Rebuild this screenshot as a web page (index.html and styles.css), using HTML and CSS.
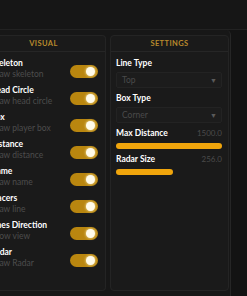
FILE: index.html
```html
<!DOCTYPE html>
<html lang="en">
<head>
	<meta charset="UTF-8">
	<title>Menu</title>
	<link rel="stylesheet" href="styles.css">
</head>
<body>
	<div class="topbar"></div>
	<div class="frame">
		<div class="card visual">
			<div class="card-head">VISUAL</div>
			<div class="rows">
				<div class="row"><div class="txt"><div class="t">Skeleton</div><div class="s">Draw skeleton</div></div><span class="tog"></span></div>
				<div class="row"><div class="txt"><div class="t">Head Circle</div><div class="s">Draw head circle</div></div><span class="tog"></span></div>
				<div class="row"><div class="txt"><div class="t">Box</div><div class="s">Draw player box</div></div><span class="tog"></span></div>
				<div class="row"><div class="txt"><div class="t">Distance</div><div class="s">Draw distance</div></div><span class="tog"></span></div>
				<div class="row"><div class="txt"><div class="t">Name</div><div class="s">Draw name</div></div><span class="tog"></span></div>
				<div class="row"><div class="txt"><div class="t">Tracers</div><div class="s">Draw line</div></div><span class="tog"></span></div>
				<div class="row"><div class="txt"><div class="t">Lines Direction</div><div class="s">Show view</div></div><span class="tog"></span></div>
				<div class="row"><div class="txt"><div class="t">Radar</div><div class="s">Draw Radar</div></div><span class="tog"></span></div>
			</div>
		</div>
		<div class="card settings">
			<div class="card-head">SETTINGS</div>
			<div class="fields">
				<div class="lbl">Line Type</div>
				<div class="sel"><span>Top</span><i>▼</i></div>
				<div class="lbl">Box Type</div>
				<div class="sel"><span>Corner</span><i>▼</i></div>
				<div class="lbl"><span>Max Distance</span><em>1500.0</em></div>
				<div class="bar"><div class="fill" style="width:100%"></div></div>
				<div class="lbl"><span>Radar Size</span><em>256.0</em></div>
				<div class="bar"><div class="fill" style="width:54%"></div></div>
			</div>
		</div>
	</div>
</body>
</html>
```

FILE: styles.css
```css
*{
	padding:0;margin:0;
	box-sizing:border-box;
}
html,body{
	width:100%;
	height:100%;
	overflow:hidden;
}
body{
	background:#131313;
	font-family:Lato,"Open Sans",sans-serif;
	color:#fff;
}
.topbar{
	height:30px;
	background:#161616;
	border-bottom:1px solid #222;
}
.frame{
	display:flex;
	gap:4px;
	width:249px;
	height:266px;
	margin-left:-18px;
	padding:5px 1px 5px 0;
	background:#171717;
	border-right:1px solid #262626;
	border-top-right-radius:5px;
}
.card{
	background:#1a1a1a;
	border:1px solid #242424;
	border-radius:4px;
}
.visual{
	width:124px;
	border-left:none;
	border-radius:0 4px 4px 0;
}
.settings{
	width:119px;
}
.card-head{
	height:16px;
	line-height:15px;
	text-align:center;
	font-size:7.5px;
	font-weight:bold;
	letter-spacing:0.4px;
	color:#b8892c;
	border-bottom:1px solid #262626;
}
.rows{
	padding:6px 7px 0 8px;
}
.row{
	display:flex;
	align-items:center;
	justify-content:space-between;
	height:27px;
	padding-bottom:5px;
}
.t{
	font-size:8.5px;
	font-weight:bold;
	line-height:11px;
}
.s{
	font-size:8.5px;
	line-height:11px;
	color:#4d4d4d;
}
.tog{
	position:relative;
	width:28px;
	height:13px;
	border-radius:7px;
	background:#b9860f;
	margin-top:5px;
}
.tog:after{
	content:'';
	position:absolute;
	right:3px;
	top:2px;
	width:9px;
	height:9px;
	border-radius:50%;
	background:#fffbea;
	box-shadow:0 0 3px #fff3c0;
}
.fields{
	padding:6px 6px 0 5px;
}
.lbl{
	display:flex;
	justify-content:space-between;
	font-size:8.5px;
	font-weight:bold;
	line-height:11px;
	margin-top:5px;
}
.lbl:first-child{margin-top:0;}
.lbl em{
	font-style:normal;
	font-weight:normal;
	font-size:8px;
	color:#4b4b4b;
}
.sel{
	display:flex;
	justify-content:space-between;
	align-items:center;
	height:16px;
	margin-top:3px;
	padding:0 4px 0 5px;
	background:#1c1c1c;
	border:1px solid #232323;
	border-radius:2px;
	font-size:8.5px;
	color:#4a4a4a;
}
.sel i{
	font-style:normal;
	font-size:7px;
	color:#5a5a5a;
}
.bar{
	height:6px;
	margin-top:4px;
}
.fill{
	height:6px;
	border-radius:3px;
	background:#f0a50c;
}
```
